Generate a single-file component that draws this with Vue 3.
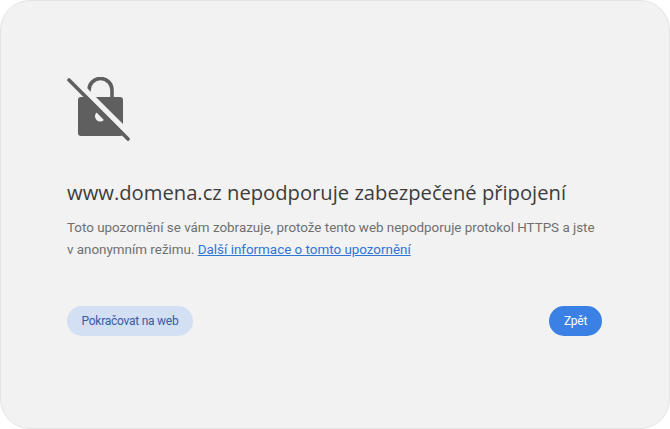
<script setup>
const title = 'www.domena.cz nepodporuje zabezpečené připojení'
</script>

<template>
  <main class="card">
    <svg class="icon" width="64" height="64" viewBox="67 77 64 64" fill="none">
      <path d="M89 97v-7a11.5 11.5 0 0 1 23 0v8" stroke="#5f5f5f" stroke-width="3.6" />
      <rect x="78" y="97" width="45" height="39" rx="3" fill="#5f5f5f" />
      <path d="M68 73l62 62" stroke="#f2f2f2" stroke-width="5.5" />
      <path d="M96.5 112.5a5.2 5.2 0 1 0 7.4 7.4z" fill="#f2f2f2" />
      <path d="M69 80l59 59" stroke="#5f5f5f" stroke-width="3.6" stroke-linecap="round" />
    </svg>
    <h1 class="title">{{ title }}</h1>
    <p class="text">
      Toto upozornění se vám zobrazuje, protože tento web nepodporuje protokol HTTPS a jste<br />
      v anonymním režimu. <a class="link" href="#">Další informace o tomto upozornění</a>
    </p>
    <div class="actions">
      <button class="btn secondary">Pokračovat na web</button>
      <button class="btn primary">Zpět</button>
    </div>
  </main>
</template>

<style>
html, body { margin: 0; background: #fff; }
</style>

<style scoped>
.card {
  box-sizing: border-box;
  width: 670px;
  height: 429px;
  padding: 76px 67px 0 66px;
  background: #f2f2f2;
  border: 1px solid #e4e4e4;
  border-radius: 30px;
  font-family: "Open Sans", "Noto Sans", sans-serif;
}
.icon { display: block; }
.title {
  margin: 37px 0 0;
  font-size: 20.2px;
  line-height: 28px;
  font-weight: 400;
  color: #3d3d3d;
}
.text {
  margin: 11px 0 0;
  font-family: Roboto, "Open Sans", sans-serif;
  font-size: 13.4px;
  line-height: 22px;
  color: #6f6f6f;
  white-space: nowrap;
}
.link { color: #2f74d8; }
.actions {
  display: flex;
  justify-content: space-between;
  margin-top: 45px;
}
.btn {
  height: 30px;
  border: none;
  border-radius: 15px;
  font-family: Roboto, "Open Sans", sans-serif;
  font-size: 12px;
  letter-spacing: -0.25px;
  padding: 0;
}
.secondary { width: 126px; background: #d3dff3; color: #3a5aa5; }
.primary { width: 53px; background: #3b80e4; color: #fff; }
</style>
